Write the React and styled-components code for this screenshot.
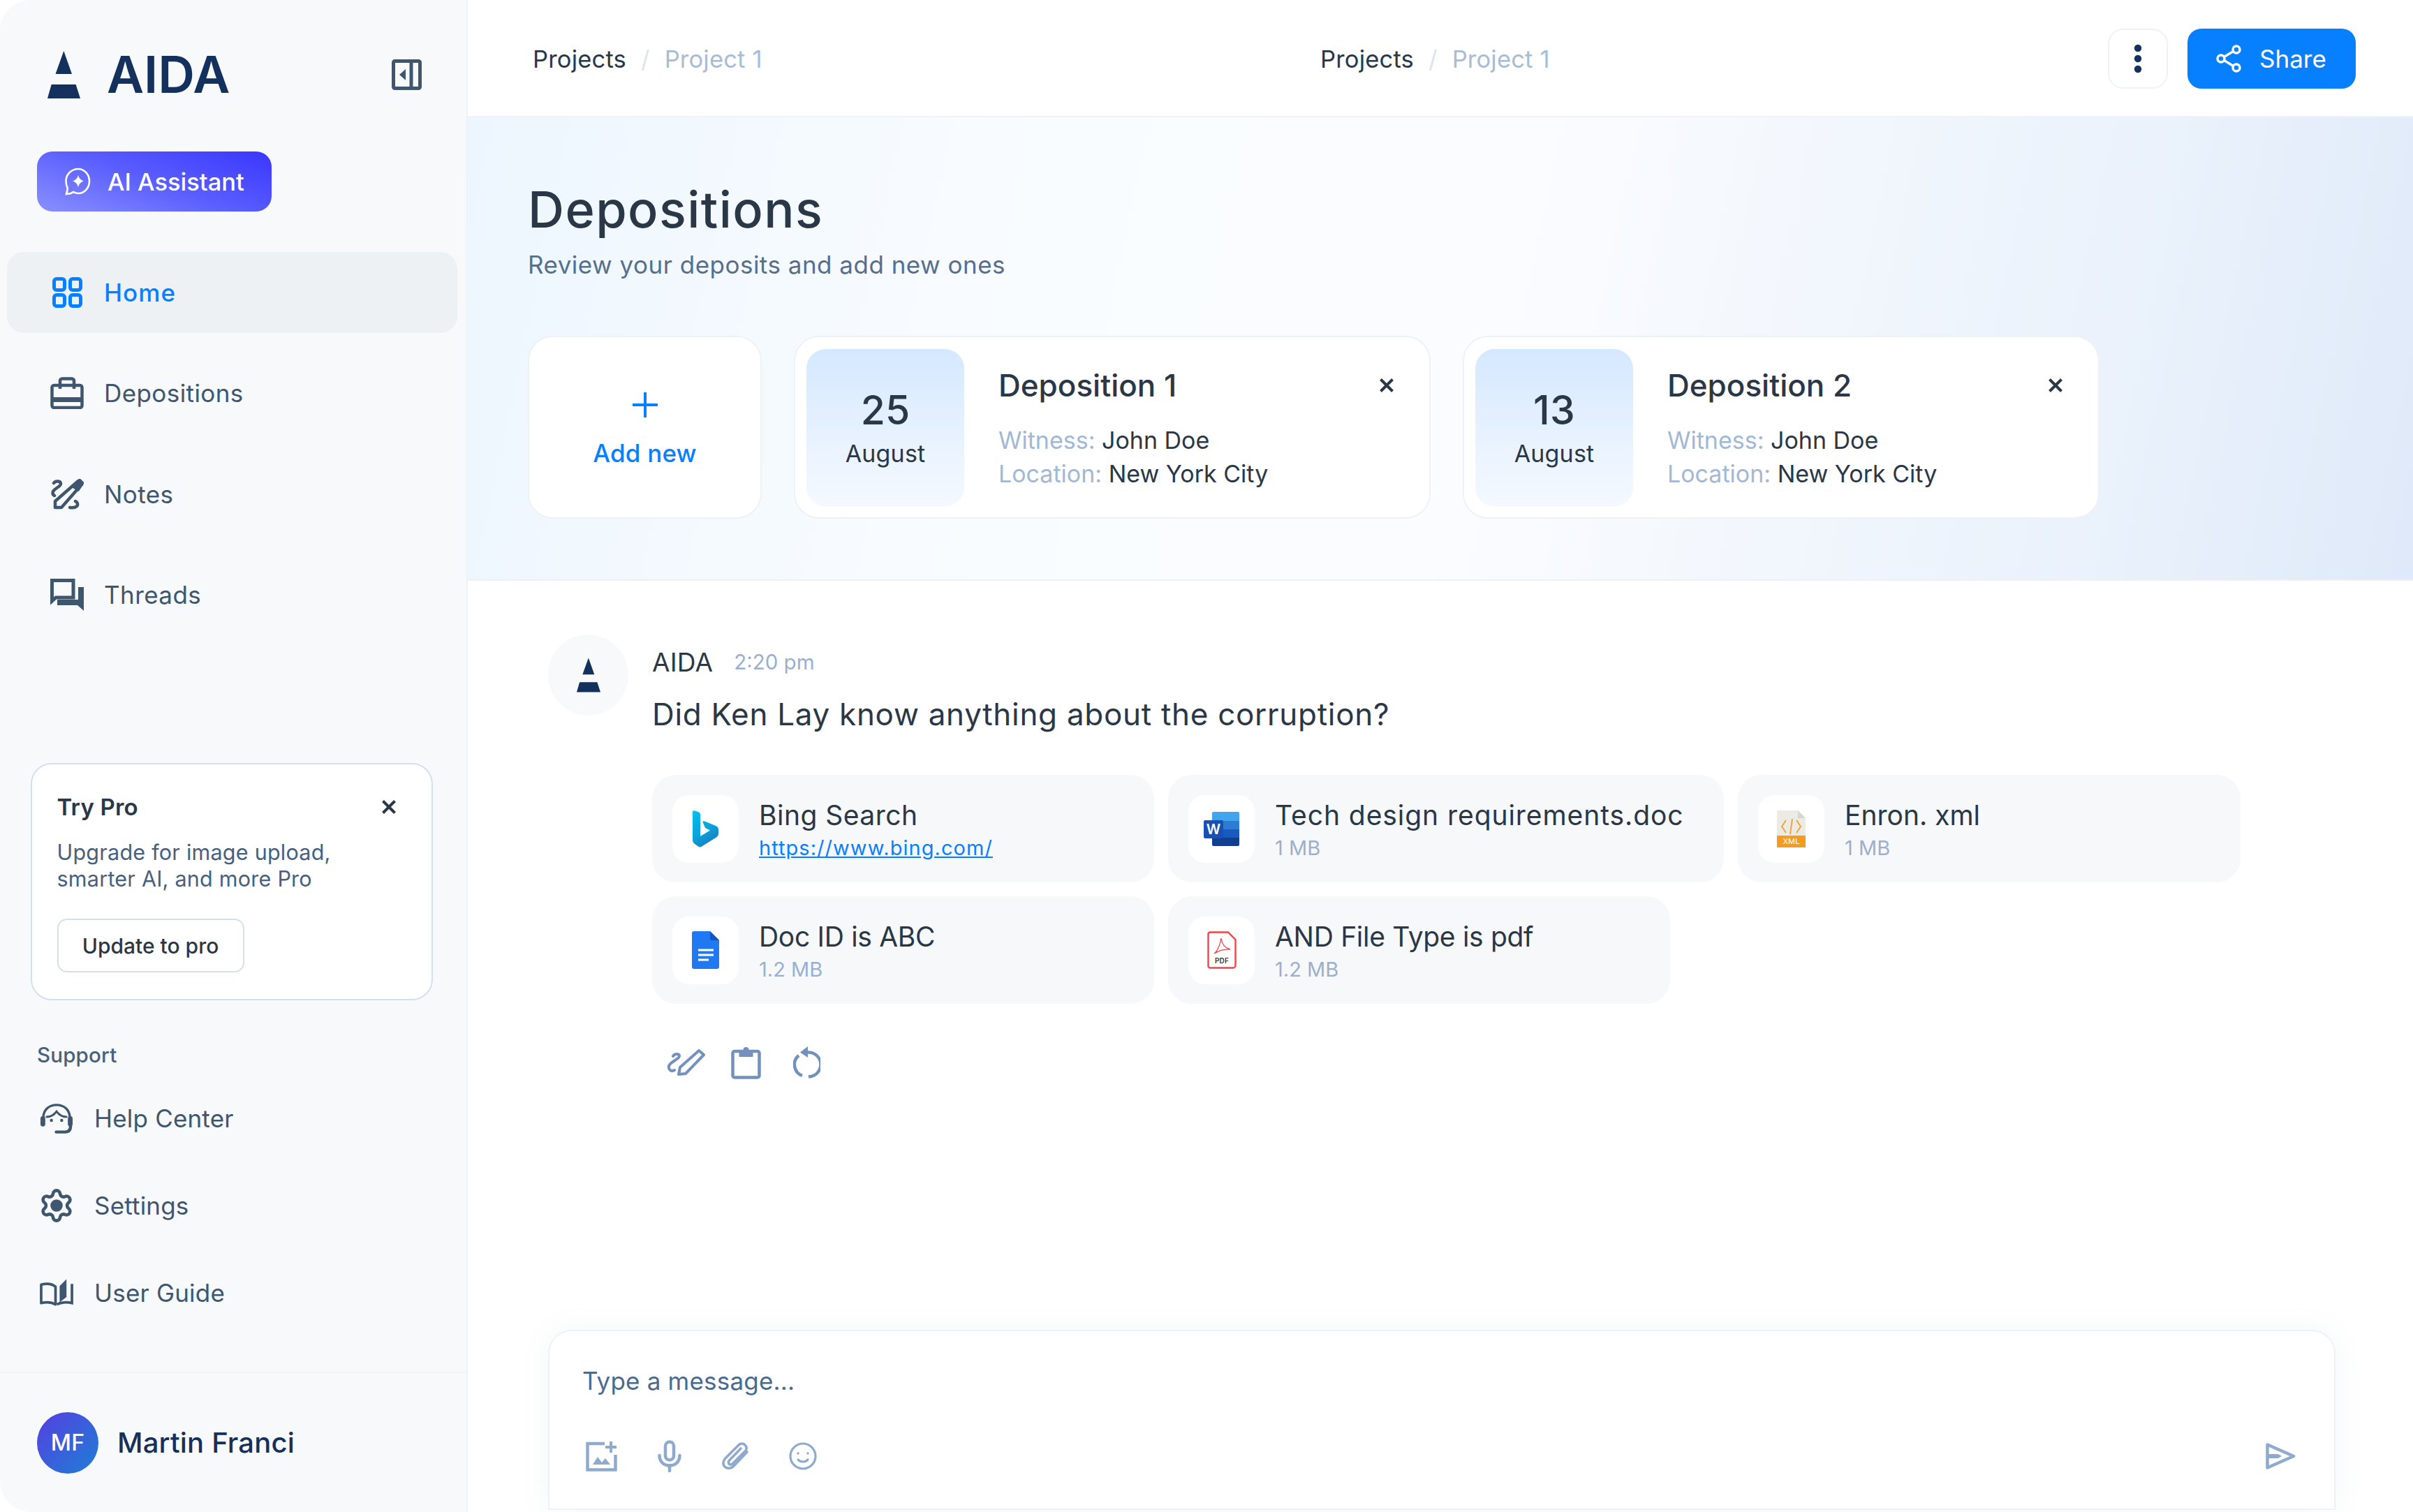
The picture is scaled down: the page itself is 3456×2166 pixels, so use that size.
import React from "react";
import styled, { createGlobalStyle } from "styled-components";
import { Settings } from "lucide-react";

const GlobalStyle = createGlobalStyle`
  * { box-sizing: border-box; }
  html, body { margin: 0; padding: 0; background: #fff; }
  body {
    font-family: "Inter", "Noto Sans", sans-serif;
    color: #2a3746;
    letter-spacing: 0.012em;
  }
`;

const Page = styled.div`
  display: flex;
  width: 3456px;
  height: 2166px;
  overflow: hidden;
  background: #fff;
`;

/* sidebar */
const Sidebar = styled.aside`
  width: 670px;
  flex: none;
  display: flex;
  flex-direction: column;
  background: #f8f9fb;
  border-right: 2px solid #f0f3f6;
  border-radius: 44px 0 0 44px;
`;
const Brand = styled.div`
  display: flex;
  align-items: center;
  justify-content: space-between;
  padding: 73px 64px 0 68px;
`;
const BrandLeft = styled.div`
  display: flex;
  align-items: center;
  gap: 38px;
`;
const BrandName = styled.div`
  font-size: 73px;
  line-height: 68px;
  font-weight: 600;
  color: #14305c;
  letter-spacing: 0;
`;
const AssistantButton = styled.button`
  display: flex;
  align-items: center;
  gap: 24px;
  width: 336px;
  height: 86px;
  margin: 76px 0 0 53px;
  padding: 0 0 0 39px;
  border: 0;
  border-radius: 22px;
  background: linear-gradient(200deg, #3a36ff 0%, #5a5eff 50%, #8a90ff 100%);
  color: #fff;
  font: 500 34.5px "Inter", sans-serif;
`;
const Nav = styled.nav`
  display: flex;
  flex-direction: column;
  gap: 28.4px;
  margin: 58px 13px 0 10px;
`;
const NavRow = styled.div`
  display: flex;
  align-items: center;
  gap: 29px;
  height: 116px;
  padding-left: 62px;
  border-radius: 24px;
  background: ${(p) => (p.$active ? "#edf1f4" : "transparent")};
  color: ${(p) => (p.$active ? "#0780ff" : "#3f566f")};
  font-size: 35px;
  font-weight: ${(p) => (p.$active ? 500 : 400)};
  letter-spacing: ${(p) => (p.$active ? "0.03em" : "0.012em")};
`;
const IconBox = styled.span`
  display: flex;
  align-items: center;
  justify-content: center;
  width: 48px;
  flex: none;
`;
const ProCard = styled.div`
  width: 576px;
  height: 340px;
  margin: 183px 0 0 44px;
  padding: 41px 50px 0 35.5px;
  background: #fff;
  border: 2.5px solid #d5e0ee;
  border-radius: 30px;
`;
const ProHead = styled.div`
  display: flex;
  align-items: center;
  justify-content: space-between;
  height: 40px;
  font-size: 33px;
  font-weight: 600;
  color: #2a3746;
`;
const ProText = styled.p`
  margin: 26px 0 0;
  font-size: 30.5px;
  line-height: 38px;
  color: #46607f;
  letter-spacing: 0.008em;
  white-space: nowrap;
`;
const ProButton = styled.button`
  display: block;
  width: 268px;
  height: 77px;
  margin-top: 38px;
  background: #fff;
  border: 2.5px solid #d5e0ee;
  border-radius: 14px;
  color: #2a3746;
  font: 500 30px "Inter", sans-serif;
`;
const SupportLabel = styled.div`
  margin: 60px 0 0 53px;
  font-size: 29.5px;
  line-height: 36px;
  font-weight: 500;
  color: #46607f;
`;
const SupportList = styled.div`
  display: flex;
  flex-direction: column;
  gap: 65px;
  margin: 43px 0 0 57px;
`;
const SupportRow = styled.div`
  display: flex;
  align-items: center;
  gap: 30px;
  height: 60px;
  font-size: 35px;
  color: #3f566f;
`;
const UserBar = styled.div`
  display: flex;
  align-items: center;
  gap: 27px;
  height: 201px;
  margin-top: auto;
  padding-left: 53px;
  border-top: 2px solid #f0f3f6;
`;
const Avatar = styled.div`
  display: flex;
  align-items: center;
  justify-content: center;
  width: 88px;
  height: 88px;
  border-radius: 50%;
  background: linear-gradient(135deg, #5540e0 0%, #1e7ed6 100%);
  color: #fff;
  font-size: 32px;
  font-weight: 500;
`;
const UserName = styled.div`
  font-size: 40px;
  font-weight: 500;
  color: #14305c;
`;

/* main column */
const Main = styled.main`
  flex: 1;
  min-width: 0;
  display: flex;
  flex-direction: column;
`;
const TopBar = styled.header`
  display: flex;
  align-items: center;
  justify-content: space-between;
  height: 168px;
  padding: 2px 82px 0 93px;
  border-bottom: 2px solid #eff3f6;
`;
const Crumbs = styled.div`
  display: flex;
  align-items: center;
  gap: 21px;
  font-size: 34.5px;
  color: #2a3746;
`;
const CrumbSep = styled.span`
  color: #dde4ec;
`;
const CrumbMuted = styled.span`
  color: #a9bcd6;
`;
const TopActions = styled.div`
  display: flex;
  align-items: center;
  gap: 28px;
`;
const MenuButton = styled.button`
  display: flex;
  align-items: center;
  justify-content: center;
  width: 86px;
  height: 86px;
  padding: 0;
  background: #fff;
  border: 2px solid #eef2f6;
  border-radius: 22px;
`;
const ShareButton = styled.button`
  display: flex;
  align-items: center;
  gap: 26px;
  width: 241px;
  height: 86px;
  padding: 0 0 0 41px;
  border: 0;
  border-radius: 20px;
  background: #0780ff;
  color: #fff;
  font: 400 35px "Inter", sans-serif;
`;
const Hero = styled.section`
  height: 664px;
  flex: none;
  padding: 90px 0 0 86px;
  border-bottom: 2px solid #edf1f5;
  background: linear-gradient(102deg, #edf6fe 0%, #f9fcff 28%, #fbfcff 52%, #e9f1fb 85%, #dfe9f9 100%);
`;
const HeroTitle = styled.h1`
  margin: 0;
  font-size: 72px;
  line-height: 84px;
  font-weight: 500;
  color: #2a3746;
  letter-spacing: 0.02em;
`;
const HeroSub = styled.p`
  margin: 17px 0 0;
  font-size: 35px;
  line-height: 40px;
  color: #566f8c;
  letter-spacing: 0.014em;
`;
const CardRow = styled.div`
  display: flex;
  gap: 46px;
  margin-top: 82px;
`;
const AddCard = styled.div`
  display: flex;
  flex-direction: column;
  align-items: center;
  justify-content: center;
  gap: 29px;
  width: 335px;
  height: 262px;
  padding-top: 7px;
  background: #fff;
  border: 2px solid #eef2f6;
  border-radius: 36px;
  color: #0780ff;
  font-size: 35px;
  font-weight: 500;
`;
const DepositionCard = styled.div`
  display: flex;
  width: 912px;
  height: 262px;
  padding: 17px 0 0 16px;
  background: #fff;
  border: 2px solid #eef2f6;
  border-radius: 36px;
`;
const DateTile = styled.div`
  display: flex;
  flex-direction: column;
  align-items: center;
  width: 226px;
  height: 226px;
  flex: none;
  padding-top: 56px;
  border-radius: 28px;
  background: linear-gradient(180deg, #d4e8fe 0%, #e6f1ff 50%, #f5f9ff 100%);
`;
const DateDay = styled.div`
  font-size: 57px;
  line-height: 64px;
  font-weight: 500;
  color: #2a3746;
`;
const DateMonth = styled.div`
  margin-top: 8px;
  font-size: 34px;
  line-height: 44px;
  color: #2a3746;
`;
const DepositionBody = styled.div`
  flex: 1;
  padding: 27px 50px 0 49px;
`;
const DepositionHead = styled.div`
  display: flex;
  align-items: center;
  justify-content: space-between;
  height: 50px;
  font-size: 44px;
  font-weight: 500;
  color: #2a3746;
  letter-spacing: 0;
`;
const DepositionMeta = styled.div`
  margin-top: 30px;
  font-size: 34px;
  line-height: 48px;
  color: #2a3746;
  letter-spacing: 0;
`;
const MetaLabel = styled.span`
  color: #a3b8d4;
`;

/* chat */
const Chat = styled.section`
  display: flex;
  gap: 34px;
  padding: 77px 0 0 115px;
`;
const ChatAvatar = styled.div`
  display: flex;
  align-items: center;
  justify-content: center;
  width: 115px;
  height: 116px;
  flex: none;
  border-radius: 50%;
  background: #f7f9fb;
`;
const ChatBody = styled.div`
  padding-top: 16px;
`;
const ChatMeta = styled.div`
  display: flex;
  align-items: center;
  gap: 30px;
  height: 46px;
  font-size: 37px;
  color: #2a3746;
`;
const ChatTime = styled.span`
  font-size: 29.5px;
  color: #9ab0ce;
  letter-spacing: 0;
`;
const Question = styled.div`
  margin-top: 24px;
  font-size: 44px;
  line-height: 56px;
  color: #2a3746;
  letter-spacing: 0.016em;
`;
const Chips = styled.div`
  display: flex;
  flex-wrap: wrap;
  gap: 20px;
  width: 2290px;
  margin-top: 59px;
`;
const Chip = styled.div`
  display: flex;
  align-items: center;
  gap: 29px;
  width: ${(p) => p.$width}px;
  height: 154px;
  padding: 0 29px;
  background: #f7f8fa;
  border-radius: 34px;
`;
const ChipIcon = styled.div`
  display: flex;
  align-items: center;
  justify-content: center;
  width: 95px;
  height: 97px;
  flex: none;
  background: #fff;
  border-radius: 24px;
`;
const ChipText = styled.div`
  padding-top: 4px;
`;
const ChipTitle = styled.div`
  font-size: 39px;
  line-height: 50px;
  color: #2a3746;
  letter-spacing: ${(p) => p.$track}em;
  white-space: nowrap;
`;
const ChipSub = styled.div`
  margin-top: 2px;
  font-size: 29px;
  line-height: 40px;
  color: #9ab0ce;
  letter-spacing: 0;
`;
const ChipLink = styled.a`
  display: block;
  margin-top: 2px;
  font-size: 29px;
  line-height: 40px;
  color: #0780ff;
  text-decoration: underline;
  letter-spacing: 0.036em;
`;
const ChatActions = styled.div`
  display: flex;
  align-items: center;
  gap: 37px;
  height: 46px;
  margin: 61px 0 0 21px;
  color: #7291bc;
  & svg:last-child {
    margin-left: 9px;
  }
`;

/* composer */
const Composer = styled.section`
  width: 2560px;
  height: 258px;
  margin: auto 0 3px 115px;
  padding: 49px 55px 0 47px;
  background: #fff;
  border: 2px solid #eef2f5;
  border-radius: 34px 34px 0 0;
  box-shadow: 0 0 40px rgba(120, 140, 170, 0.08);
`;
const ComposerText = styled.div`
  font-size: 35px;
  line-height: 44px;
  color: #4a6a8e;
`;
const ComposerTools = styled.div`
  display: flex;
  align-items: center;
  height: 46px;
  margin: 63px 0 0 5px;
  color: #8eabcf;
`;
const ToolGroup = styled.div`
  display: flex;
  align-items: center;
  gap: 58px;
  margin-right: auto;
`;

const LogoMark = ({ width = 47, height = 68 }) => (
  <svg width={width} height={height} viewBox="0 0 47 68" fill="#14305c">
    <path d="M23.3 0 35 33H11.5Z" />
    <path d="M5.7 48H40.6L47 68H0Z" />
  </svg>
);

const CollapseIcon = () => (
  <svg width="43" height="44" viewBox="0 0 43 44" fill="none" stroke="#3f566f" strokeWidth="5">
    <rect x="2.5" y="2.5" width="38" height="39" rx="2" />
    <path d="M28 2v40" />
    <path d="M20 14v16l-9-8Z" fill="#3f566f" stroke="none" />
  </svg>
);

const SparkBubble = () => (
  <svg width="38" height="40" viewBox="0 0 38 40" fill="none" stroke="#fff" strokeWidth="2.6">
    <path d="M20 2c9 0 16 8 16 17.5S29 37 20 37c-3 0-5-1-7-2-2 1.500-5 3-10 3 1-3 2-6 1.500-9C3 26 2.500 23 2.500 19.500 2.500 10 10 2 20 2Z" />
    <path d="M20 10.500c1 5 3.500 7.500 8 9-4.500 1.500-7 4-8 9-1-5-3.500-7.500-8-9 4.500-1.500 7-4 8-9Z" fill="#fff" stroke="none" />
  </svg>
);

const HomeIcon = () => (
  <svg width="43" height="44" viewBox="0 0 43 44" fill="none" stroke="currentColor" strokeWidth="5">
    <rect x="2.500" y="2.500" width="15" height="16" rx="3.500" />
    <rect x="25.500" y="2.500" width="15" height="16" rx="3.500" />
    <rect x="2.500" y="25.500" width="15" height="16" rx="3.500" />
    <rect x="25.500" y="25.500" width="15" height="16" rx="3.500" />
  </svg>
);

const BagIcon = () => (
  <svg width="48" height="46" viewBox="0 0 48 46" fill="none" stroke="currentColor" strokeWidth="4.500">
    <rect x="2.500" y="12" width="43" height="32" rx="3" />
    <path d="M14 17V5.500a3 3 0 0 1 3-3h14a3 3 0 0 1 3 3V17" />
    <path d="M2 29h44v7H2Z" fill="currentColor" stroke="none" />
  </svg>
);

const NotesIcon = () => (
  <svg width="48" height="44" viewBox="0 0 48 44" fill="none" stroke="currentColor" strokeWidth="4.500" strokeLinecap="round">
    <path d="M40 3l5 5-29 33H7v-9Z" strokeLinejoin="round" />
    <path d="M33 11l9-9 4 4-6 9Z" fill="currentColor" />
    <path d="M5 6c3-4 10-3 10 1 0 4-8 6-11 11-1 3 0 5 2 6" />
    <path d="M28 41c6 1 12-1 11-5 0-2-1-3-3-4" />
  </svg>
);

const ThreadsIcon = () => (
  <svg width="48" height="46" viewBox="0 0 48 46" fill="none" stroke="currentColor" strokeWidth="5">
    <path d="M2.500 2.500H33V27H8l-5.500 5Z" />
    <path d="M40 12h8v34l-9-8H10v-8h30Z" fill="currentColor" stroke="none" />
  </svg>
);

const HelpIcon = () => (
  <svg width="49" height="44" viewBox="0 0 49 44" fill="none" stroke="currentColor" strokeWidth="3.500" strokeLinecap="round">
    <path d="M5 22C5 10 13 2.500 24.500 2.500S44 10 44 22" />
    <path d="M10 20c6 0 11-3 14.500-8C28 17 33 20 39 20" strokeWidth="3" />
    <rect x="1" y="19" width="7" height="15" rx="3.500" fill="currentColor" stroke="none" />
    <rect x="41" y="19" width="7" height="15" rx="3.500" fill="currentColor" stroke="none" />
    <circle cx="17" cy="25" r="2.300" fill="currentColor" stroke="none" />
    <circle cx="32" cy="25" r="2.300" fill="currentColor" stroke="none" />
    <path d="M45 33c0 6-3 9-8 9H24" strokeWidth="4.500" />
  </svg>
);

const GearWrap = styled.span`
  display: flex;
  & circle { fill: currentColor; }
`;

const BookIcon = () => (
  <svg width="49" height="40" viewBox="0 0 49 40" fill="none" stroke="currentColor" strokeWidth="3.800">
    <path d="M2 8c8-2 16-1 21 3v26c-5-3-13-4-21-2Z" strokeLinejoin="round" />
    <path d="M47 7v28c-8-2-17-1-22 2" />
    <path d="M29 10l10-10v26l-10 8Z" fill="currentColor" stroke="none" />
  </svg>
);

const CloseIcon = ({ size = 22, color = "#2a3746" }) => (
  <svg width={size} height={size} viewBox="0 0 22 22" fill="none" stroke={color} strokeWidth="4">
    <path d="M2.500 2.500l17 17M19.500 2.500l-17 17" />
  </svg>
);

const DotsIcon = () => (
  <svg width="12" height="42" viewBox="0 0 12 42" fill="#14305c">
    <circle cx="6" cy="6" r="5.200" />
    <circle cx="6" cy="21" r="5.200" />
    <circle cx="6" cy="36" r="5.200" />
  </svg>
);

const ShareIcon = () => (
  <svg width="36" height="40" viewBox="0 0 36 40" fill="none" stroke="#fff" strokeWidth="3.400">
    <circle cx="7" cy="20" r="5" />
    <circle cx="29" cy="7" r="5" />
    <circle cx="29" cy="33" r="5" />
    <path d="M11.500 17.500L24.500 9.500M11.500 22.500L24.500 30.500" />
  </svg>
);

const PlusIcon = () => (
  <svg width="38" height="38" viewBox="0 0 38 38" fill="none" stroke="#0780ff" strokeWidth="4">
    <path d="M19 1v36M1 19h36" />
  </svg>
);

const BingLogo = () => (
  <svg width="37" height="53" viewBox="0 0 37 53">
    <defs>
      <linearGradient id="bing" x1="0" y1="0" x2="0.5" y2="1">
        <stop offset="0" stopColor="#00c0ee" />
        <stop offset="0.6" stopColor="#08a5dc" />
        <stop offset="1" stopColor="#1a7fc4" />
      </linearGradient>
    </defs>
    <path d="M0 2c0-2 1-2 3-1.500l5 1.500c2 .8 3 2 3 4v31l14-8.500-7-3.500-3-7c-1-2 0-3 2-2.500l15 6c3 1.200 5 3 5 6v5c0 3-1 4.500-3 6L14 51c-2 1.500-4 2-6 .5L3 48c-2-1.500-3-3-3-6Z" fill="url(#bing)" />
  </svg>
);

const GoogleDoc = () => (
  <svg width="39" height="54" viewBox="0 0 39 54">
    <path d="M3 0H26L39 13V51a3 3 0 0 1-3 3H3a3 3 0 0 1-3-3V3a3 3 0 0 1 3-3Z" fill="#2079f2" />
    <path d="M26 0L39 13H29a3 3 0 0 1-3-3Z" fill="#0f55c4" />
    <path d="M9 27H31M9 34H31M9 41H24" stroke="#fff" strokeWidth="3" />
  </svg>
);

const WordLogo = () => (
  <svg width="51" height="49" viewBox="0 0 51 49">
    <path d="M14 0H49a2 2 0 0 1 2 2V13H12V2a2 2 0 0 1 2-2Z" fill="#41a5ee" />
    <rect x="12" y="13" width="39" height="12" fill="#2b7cd3" />
    <rect x="12" y="25" width="39" height="12" fill="#185abd" />
    <path d="M12 37H51V47a2 2 0 0 1-2 2H14a2 2 0 0 1-2-2Z" fill="#103f91" />
    <rect x="0" y="12" width="28" height="26" rx="2" fill="#1a4fb5" />
    <text x="14" y="32" textAnchor="middle" fontSize="20" fontWeight="600" fill="#fff" fontFamily="Inter, sans-serif">W</text>
  </svg>
);

const XmlFile = () => (
  <svg width="41" height="53" viewBox="0 0 41 53">
    <path d="M0 0H30L41 11V37H0Z" fill="#ebebe3" />
    <path d="M30 0L41 11H30Z" fill="#d7d7cc" />
    <rect x="0" y="36" width="41" height="17" fill="#f39c1f" />
    <path d="M13 14l-6 9 6 9M28 14l6 9-6 9M22 12l-3 22" fill="none" stroke="#f0a030" strokeWidth="1.800" />
    <text x="20.500" y="48" textAnchor="middle" fontSize="11" fill="#fff" fontFamily="Inter, sans-serif">XML</text>
  </svg>
);

const PdfFile = () => (
  <svg width="42" height="54" viewBox="0 0 42 54">
    <path d="M4 1.500H30L40.500 12V49a3.500 3.500 0 0 1-3.500 3.500H4A3 3 0 0 1 1.500 49V4A3 3 0 0 1 4 1.500Z" fill="#fff" stroke="#f0444a" strokeWidth="2.400" />
    <path d="M10 32c5-4 9-14 10-22 1 8 5 14 13 16-8-1-15 1-23 6Z" fill="none" stroke="#f0444a" strokeWidth="1.300" />
    <text x="21" y="46" textAnchor="middle" fontSize="10" fontWeight="600" fill="#333" fontFamily="Inter, sans-serif">PDF</text>
  </svg>
);

const PenSquiggle = () => (
  <svg width="55" height="38" viewBox="0 0 55 38" fill="none" stroke="currentColor" strokeWidth="4" strokeLinecap="round" strokeLinejoin="round">
    <path d="M46 2l7 6-26 27-10 1 2-10Z" />
    <path d="M9 10c2-4 9-4 9 0 0 4-13 8-15 14-1 5 3 9 8 6" />
  </svg>
);

const ClipboardIcon = () => (
  <svg width="43" height="47" viewBox="0 0 43 47" fill="none" stroke="currentColor" strokeWidth="4.500">
    <rect x="2.500" y="7" width="38" height="37.500" rx="2.500" />
    <path d="M11.500 5h6a4 4 0 0 1 8 0h6v10h-20Z" fill="currentColor" stroke="none" />
  </svg>
);

const RotateIcon = () => (
  <svg width="39" height="46" viewBox="0 0 39 46" fill="none" stroke="currentColor" strokeWidth="4.500">
    <path d="M13 42a17 17 0 0 1-5-29" />
    <path d="M18 9a17 17 0 0 1 8 34l-4 .5" />
    <path d="M21 0v16L10 8.500Z" fill="currentColor" stroke="none" />
  </svg>
);

const ImagePlusIcon = () => (
  <svg width="45" height="44" viewBox="0 0 45 44" fill="none" stroke="currentColor" strokeWidth="4.500">
    <path d="M27 4H2.500V41.500H42.500V20" />
    <path d="M10 34l7-11 6 8 5-6 7 9Z" fill="currentColor" stroke="none" />
    <path d="M36 1v16M28 9h16" strokeWidth="4" />
  </svg>
);

const MicIcon = () => (
  <svg width="34" height="46" viewBox="0 0 34 46" fill="none" stroke="currentColor" strokeWidth="4.500" strokeLinecap="round">
    <rect x="11" y="2.500" width="12" height="26" rx="6" />
    <path d="M2.500 22c0 9 6.500 14.500 14.500 14.500S31.500 31 31.500 22" />
    <path d="M17 36v8" />
  </svg>
);

const ClipIcon = () => (
  <svg width="38" height="40" viewBox="0 0 38 40" fill="none" stroke="currentColor" strokeWidth="3.600" strokeLinecap="round">
    <path d="M36 14L17 34c-6 6-14 3-15-3-.5-3 .5-5 2.500-7.500L23 5c4-4.500 9-3 11 0 2 3 1 6-1 8L15 31c-2 2-5 1-5.500-1-.3-1.500 0-3 1.500-4.500L27 9" />
  </svg>
);

const SmileIcon = () => (
  <svg width="40" height="40" viewBox="0 0 40 40" fill="none" stroke="currentColor" strokeWidth="3.200" strokeLinecap="round">
    <circle cx="20" cy="20" r="18" />
    <circle cx="13" cy="16" r="1.800" fill="currentColor" stroke="none" />
    <circle cx="27" cy="16" r="1.800" fill="currentColor" stroke="none" />
    <path d="M13 25c3 4 11 4 14 0" />
  </svg>
);

const SendIcon = () => (
  <svg width="43" height="38" viewBox="0 0 43 38" fill="none" stroke="currentColor" strokeWidth="4.500" strokeLinejoin="round">
    <path d="M2.500 2.500L40 19 2.500 35.500Z" />
    <path d="M3 16h15l5 3-5 3H3Z" fill="currentColor" stroke="none" />
  </svg>
);

const navItems = [
  { label: "Home", icon: <HomeIcon />, active: true },
  { label: "Depositions", icon: <BagIcon /> },
  { label: "Notes", icon: <NotesIcon /> },
  { label: "Threads", icon: <ThreadsIcon /> },
];

const supportItems = [
  { label: "Help Center", icon: <HelpIcon /> },
  {
    label: "Settings",
    icon: (
      <GearWrap>
        <Settings size={52} strokeWidth={2.1} />
      </GearWrap>
    ),
  },
  { label: "User Guide", icon: <BookIcon /> },
];

const depositions = [
  { day: 25, title: "Deposition 1" },
  { day: 13, title: "Deposition 2" },
];

const files = [
  { title: "Bing Search", link: "https://www.bing.com/", icon: <BingLogo />, width: 719, track: 0.012 },
  { title: "Tech design requirements.doc", sub: "1 MB", icon: <WordLogo />, width: 796, track: 0.024 },
  { title: "Enron. xml", sub: "1 MB", icon: <XmlFile />, width: 720, track: 0 },
  { title: "Doc ID is ABC", sub: "1.2 MB", icon: <GoogleDoc />, width: 719, track: -0.008 },
  { title: "AND File Type is pdf", sub: "1.2 MB", icon: <PdfFile />, width: 719, track: -0.008 },
];

const Breadcrumb = () => (
  <Crumbs>
    <span>Projects</span>
    <CrumbSep>/</CrumbSep>
    <CrumbMuted>Project 1</CrumbMuted>
  </Crumbs>
);

const App = () => {
  return (
    <Page>
      <GlobalStyle />
      <Sidebar>
        <Brand>
          <BrandLeft>
            <LogoMark />
            <BrandName>AIDA</BrandName>
          </BrandLeft>
          <CollapseIcon />
        </Brand>
        <AssistantButton>
          <SparkBubble />
          AI Assistant
        </AssistantButton>
        <Nav>
          {navItems.map((item) => (
            <NavRow key={item.label} $active={item.active}>
              <IconBox>{item.icon}</IconBox>
              {item.label}
            </NavRow>
          ))}
        </Nav>
        <ProCard>
          <ProHead>
            Try Pro
            <CloseIcon />
          </ProHead>
          <ProText>
            Upgrade for image upload,
            <br />
            smarter AI, and more Pro
          </ProText>
          <ProButton>Update to pro</ProButton>
        </ProCard>
        <SupportLabel>Support</SupportLabel>
        <SupportList>
          {supportItems.map((item) => (
            <SupportRow key={item.label}>
              <IconBox>{item.icon}</IconBox>
              {item.label}
            </SupportRow>
          ))}
        </SupportList>
        <UserBar>
          <Avatar>MF</Avatar>
          <UserName>Martin Franci</UserName>
        </UserBar>
      </Sidebar>

      <Main>
        <TopBar>
          <Breadcrumb />
          <Breadcrumb />
          <TopActions>
            <MenuButton>
              <DotsIcon />
            </MenuButton>
            <ShareButton>
              <ShareIcon />
              Share
            </ShareButton>
          </TopActions>
        </TopBar>

        <Hero>
          <HeroTitle>Depositions</HeroTitle>
          <HeroSub>Review your deposits and add new ones</HeroSub>
          <CardRow>
            <AddCard>
              <PlusIcon />
              Add new
            </AddCard>
            {depositions.map((d) => (
              <DepositionCard key={d.title}>
                <DateTile>
                  <DateDay>{d.day}</DateDay>
                  <DateMonth>August</DateMonth>
                </DateTile>
                <DepositionBody>
                  <DepositionHead>
                    {d.title}
                    <CloseIcon />
                  </DepositionHead>
                  <DepositionMeta>
                    <div>
                      <MetaLabel>Witness:</MetaLabel> John Doe
                    </div>
                    <div>
                      <MetaLabel>Location:</MetaLabel> New York City
                    </div>
                  </DepositionMeta>
                </DepositionBody>
              </DepositionCard>
            ))}
          </CardRow>
        </Hero>

        <Chat>
          <ChatAvatar>
            <LogoMark width={34} height={50} />
          </ChatAvatar>
          <ChatBody>
            <ChatMeta>
              AIDA
              <ChatTime>2:20 pm</ChatTime>
            </ChatMeta>
            <Question>Did Ken Lay know anything about the corruption?</Question>
            <Chips>
              {files.map((f) => (
                <Chip key={f.title} $width={f.width}>
                  <ChipIcon>{f.icon}</ChipIcon>
                  <ChipText>
                    <ChipTitle $track={f.track}>{f.title}</ChipTitle>
                    {f.link ? <ChipLink>{f.link}</ChipLink> : <ChipSub>{f.sub}</ChipSub>}
                  </ChipText>
                </Chip>
              ))}
            </Chips>
            <ChatActions>
              <PenSquiggle />
              <ClipboardIcon />
              <RotateIcon />
            </ChatActions>
          </ChatBody>
        </Chat>

        <Composer>
          <ComposerText>Type a message...</ComposerText>
          <ComposerTools>
            <ToolGroup>
              <ImagePlusIcon />
              <MicIcon />
              <ClipIcon />
              <SmileIcon />
            </ToolGroup>
            <SendIcon />
          </ComposerTools>
        </Composer>
      </Main>
    </Page>
  );
};

export default App;
